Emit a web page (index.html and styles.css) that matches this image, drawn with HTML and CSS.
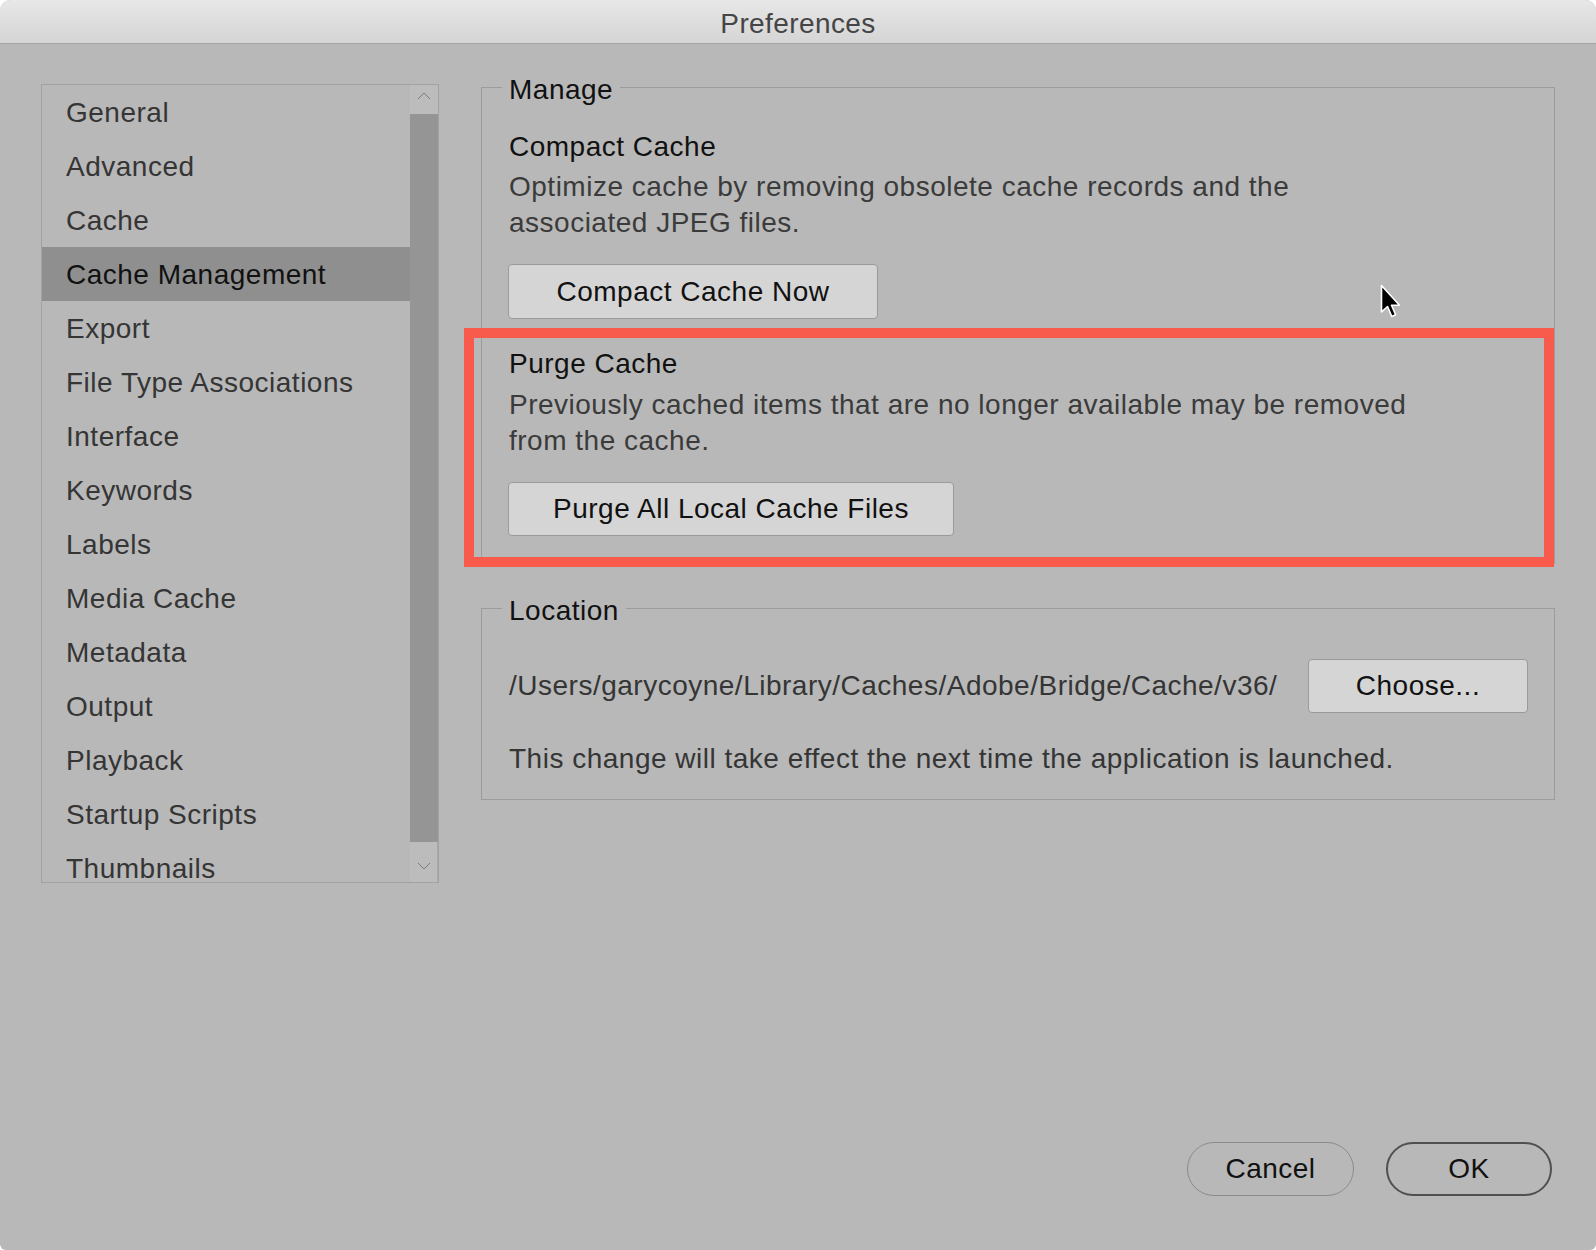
FILE: index.html
```html
<!DOCTYPE html>
<html>
<head>
<meta charset="utf-8">
<title>Preferences</title>
<link rel="stylesheet" href="styles.css">
</head>
<body>
<div class="window">
  <div class="titlebar">Preferences</div>
  <div class="main">
    <div class="sidebar">
      <ul class="list">
        <li class="item">General</li>
        <li class="item">Advanced</li>
        <li class="item">Cache</li>
        <li class="item selected">Cache Management</li>
        <li class="item">Export</li>
        <li class="item">File Type Associations</li>
        <li class="item">Interface</li>
        <li class="item">Keywords</li>
        <li class="item">Labels</li>
        <li class="item">Media Cache</li>
        <li class="item">Metadata</li>
        <li class="item">Output</li>
        <li class="item">Playback</li>
        <li class="item">Startup Scripts</li>
        <li class="item">Thumbnails</li>
      </ul>
      <div class="scrollbar">
        <div class="sb-arrow sb-up"><svg width="14" height="8" viewBox="0 0 14 8"><path d="M1 7 L7 1 L13 7" fill="none" stroke="#7a7a7a" stroke-width="1"/></svg></div>
        <div class="sb-thumb"></div>
        <div class="sb-arrow sb-down"><svg width="14" height="8" viewBox="0 0 14 8"><path d="M1 1 L7 7 L13 1" fill="none" stroke="#7a7a7a" stroke-width="1"/></svg></div>
      </div>
    </div>
    <div class="content">
      <fieldset class="group group-manage">
        <legend class="legend">Manage</legend>
        <div class="section">
          <div class="heading">Compact Cache</div>
          <div class="desc">Optimize cache by removing obsolete cache records and the<br>associated JPEG files.</div>
          <button class="btn btn-compact">Compact Cache Now</button>
        </div>
        <div class="section section-purge">
          <div class="heading">Purge Cache</div>
          <div class="desc">Previously cached items that are no longer available may be removed<br>from the cache.</div>
          <button class="btn btn-purge">Purge All Local Cache Files</button>
        </div>
      </fieldset>
      <fieldset class="group group-location">
        <legend class="legend">Location</legend>
        <div class="path-row">
          <span class="path">/Users/garycoyne/Library/Caches/Adobe/Bridge/Cache/v36/</span>
          <button class="btn btn-choose">Choose...</button>
        </div>
        <div class="note">This change will take effect the next time the application is launched.</div>
      </fieldset>
    </div>
  </div>
  <div class="footer">
    <button class="pill pill-cancel">Cancel</button>
    <button class="pill pill-ok">OK</button>
  </div>
  <div class="highlight"></div>
  <svg class="cursor" width="24" height="36" viewBox="0 0 24 36">
    <path d="M1.5 1.5 L1.5 28 L7.5 22.5 L11.8 32.5 L15.6 30.8 L11.5 21.3 L19.5 21.3 Z" fill="#000" stroke="#fff" stroke-width="1.6" stroke-linejoin="round"/>
  </svg>
</div>
</body>
</html>
```

FILE: styles.css
```css
html, body {
  margin: 0;
  padding: 0;
  background: #ffffff;
}

body {
  font-family: "Liberation Sans", Arial, sans-serif;
  font-size: 28px;
  letter-spacing: 0.5px;
}

.window {
  position: relative;
  width: 1596px;
  height: 1250px;
  background: #b8b8b8;
  border-radius: 11px 11px 6px 6px;
  overflow: hidden;
  display: flex;
  flex-direction: column;
}

.titlebar {
  height: 43px;
  border-bottom: 1px solid #a4a4a4;
  background: linear-gradient(#e7e7e7, #d5d5d5);
  color: #454545;
  font-size: 28px;
  letter-spacing: 0.4px;
  line-height: 48px;
  text-align: center;
  flex: none;
}

.main {
  display: flex;
  align-items: flex-start;
  padding-left: 41px;
  flex: none;
}

.sidebar {
  margin-top: 40px;
  width: 396px;
  height: 797px;
  border: 1px solid #a2a2a2;
  display: flex;
  overflow: hidden;
  flex: none;
}

.list {
  list-style: none;
  margin: 0;
  padding: 0;
  width: 368px;
  height: 797px;
  overflow: hidden;
  flex: none;
}

.item {
  height: 54px;
  line-height: 56px;
  padding-left: 24px;
  color: #353535;
  white-space: nowrap;
}

.item.selected {
  background: #8f8f8f;
  color: #111111;
}

.scrollbar {
  width: 28px;
  display: flex;
  flex-direction: column;
  background: #959595;
  flex: none;
}

.sb-arrow {
  background: #bcbcbc;
  display: flex;
  align-items: center;
  justify-content: center;
  flex: none;
}

.sb-up {
  height: 29px;
  align-items: flex-start;
}

.sb-up svg {
  margin-top: 7px;
}

.sb-thumb {
  flex: 1;
  background: #959595;
}

.sb-down {
  height: 40px;
  border-right: 1px solid #a8a8a8;
}

.sb-down svg {
  margin-top: 8px;
}

.content {
  margin-top: 23px;
  margin-left: 42px;
  width: 1074px;
  flex: none;
}

.group {
  margin: 0;
  padding: 0 26px 0 27px;
  border: 1px solid #9c9c9c;
  min-width: 0;
}

.legend {
  padding: 6px 7px 0;
  margin-left: -7px;
  line-height: 34px;
  color: #111111;
}

.section {
  padding-top: 22px;
}

.section-purge {
  padding-top: 27px;
}

.heading {
  line-height: 36px;
  color: #111111;
}

.desc {
  margin-top: 4px;
  line-height: 36px;
  color: #3b3b3b;
  white-space: nowrap;
}

.section-purge .desc {
  margin-top: 5px;
}

.btn {
  display: block;
  margin: 23px 0 0 -1px;
  height: 55px;
  padding: 0;
  border: 1px solid #9a9a9a;
  border-radius: 4px;
  background: #d5d5d5;
  font-family: inherit;
  font-size: 28px;
  letter-spacing: 0.5px;
  color: #111111;
  text-align: center;
}

.btn-compact {
  width: 370px;
}

.btn-purge {
  width: 446px;
  height: 54px;
}

.group-manage {
  padding-bottom: 27px;
}

.group-location {
  margin-top: 24px;
  padding-bottom: 22px;
}

.path-row {
  margin-top: 31px;
  display: flex;
  align-items: center;
  justify-content: space-between;
}

.path {
  color: #353535;
  white-space: nowrap;
}

.btn-choose {
  margin: 0;
  width: 220px;
  height: 54px;
}

.note {
  margin-top: 28px;
  line-height: 36px;
  color: #353535;
  white-space: nowrap;
}

.footer {
  margin-top: auto;
  display: flex;
  justify-content: flex-end;
  gap: 32px;
  padding: 0 44px 54px 0;
}

.pill {
  height: 54px;
  border-radius: 27px;
  background: transparent;
  font-family: inherit;
  font-size: 28px;
  letter-spacing: 0.5px;
  color: #111111;
  padding: 0;
}

.pill-cancel {
  width: 167px;
  border: 1.5px solid #8b8b8b;
}

.pill-ok {
  width: 166px;
  border: 2px solid #505050;
}

.highlight {
  position: absolute;
  left: 464px;
  top: 328px;
  width: 1070px;
  height: 219px;
  border: 10px solid #f85b4c;
  pointer-events: none;
}

.cursor {
  position: absolute;
  left: 1380px;
  top: 284px;
}
```
